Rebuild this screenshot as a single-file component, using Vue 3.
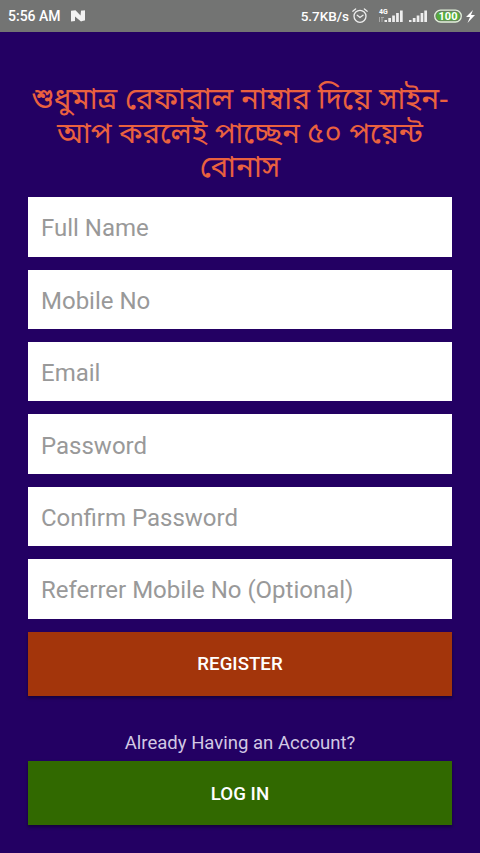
<script setup>
const fields = ['Full Name', 'Mobile No', 'Email', 'Password', 'Confirm Password', 'Referrer Mobile No (Optional)']
</script>
<template>
  <main class="screen">
    <header class="status">
      <span class="time">5:56 AM</span>
      <svg class="n" viewBox="0 0 16 14"><path d="M1 2h4v10H1zM11 1.5h4v10h-4z" fill="#cfcfcf"/><path d="M1 1.8 5.5 1.2l5 5.3L11 2l4-.5V11l-4 1.5L5 7.5V12l-4 .5z" fill="#f2f2f2"/></svg>
      <span class="speed">5.7KB/s</span>
      <svg class="tray" viewBox="0 0 128 20">
        <g fill="none" stroke="#eee" stroke-width="1.3" stroke-linecap="round">
          <circle cx="12" cy="10.3" r="6"/><path d="M9.2 9.2 12 11.4l3-2.2M4.8 5.2 7.6 3M16.4 3l2.8 2.2"/>
        </g>
        <text x="31" y="8" font-size="7" font-weight="700" fill="#fff">4G</text>
        <path d="M31.5 11v5M34 16v-5M33 11.5h3" stroke="#aaa" fill="none"/>
        <path d="M36.5 14H39v2h-2.5zM40.3 12H43v4h-2.7zM44.2 9.5h2.7V16h-2.7zM48.1 7h2.7v9h-2.7zM52 4.5h2.7V16H52z" fill="#eee"/>
        <path d="M61 14h2.5v2H61zM64.8 12h2.7v4h-2.7zM68.7 9.5h2.7V16h-2.7zM72.6 7h2.7v9h-2.7zM76.3 4.5H79V16h-2.7z" fill="#eee"/>
        <rect x="86.7" y="4.2" width="26.6" height="11.8" rx="5.9" fill="#727272" stroke="#e2f2da" stroke-width="1.3"/>
        <rect x="88.2" y="5.7" width="23.6" height="8.8" rx="4.4" fill="#55ad3c"/>
        <text x="100" y="14" text-anchor="middle" font-size="11" font-weight="700" fill="#fff">100</text>
        <path d="m125 4-7 7h4l-2.5 6 7.5-8h-4z" fill="#fff"/>
      </svg>
    </header>
    <h1 class="title">
      <span>শুধুমাত্র রেফারাল নাম্বার দিয়ে সাইন-</span>
      <span class="second">আপ করলেই পাচ্ছেন ৫০ পয়েন্ট</span>
      <span>বোনাস</span>
    </h1>
    <form class="form">
      <div v-for="f in fields" :key="f" class="field"><span>{{ f }}</span></div>
      <button class="btn register" type="button"><span>REGISTER</span></button>
      <p class="note"><span>Already Having an Account?</span></p>
      <button class="btn login" type="button"><span>LOG IN</span></button>
    </form>
  </main>
</template>
<style>
body { background: #230063; }
</style>
<style scoped>
.screen { height: 853px; box-sizing: border-box; background: #230063; font-family: Roboto, sans-serif; overflow: hidden; }
.status { height: 32px; box-sizing: border-box; background: #737473; color: #fff; display: flex; align-items: center; padding: 0 4px 0 8px; font-size: 14px; font-weight: 500; }
.time { width: 54px; white-space: nowrap; }
.n { width: 16px; height: 14px; margin-left: 8px; }
.speed { margin: 0 -1px 0 auto; font-size: 13.5px; }
.tray { width: 128px; height: 20px; font-family: Roboto, sans-serif; }
.title { margin: 52.5px 0 0; height: 112.8px; color: #ea613f; font: 400 29.7px/34px "Noto Sans Bengali", Roboto, sans-serif; text-align: center; white-space: nowrap; }
.title span { display: block; height: 34px; line-height: 34px; }
.title .second { font-size: 29.1px; }
.form { padding: 0 28px; display: flex; flex-direction: column; }
.field { height: 59.4px; margin-bottom: 13px; background: #fff; color: #999; font-size: 24px; display: flex; align-items: center; padding: 3px 13px 0; box-sizing: border-box; }
.btn { border: 0; padding: 1px 0 0; height: 64px; color: #fff; font: 500 18.7px Roboto, sans-serif; box-shadow: 0 2px 3px rgba(0, 0, 0, .4); }
.register { background: #a3350b; }
.note { margin: 37.5px 0 7px; text-align: center; color: #d2c8e4; font-size: 18.55px; line-height: 21px; }
.login { background: #316900; }
</style>
